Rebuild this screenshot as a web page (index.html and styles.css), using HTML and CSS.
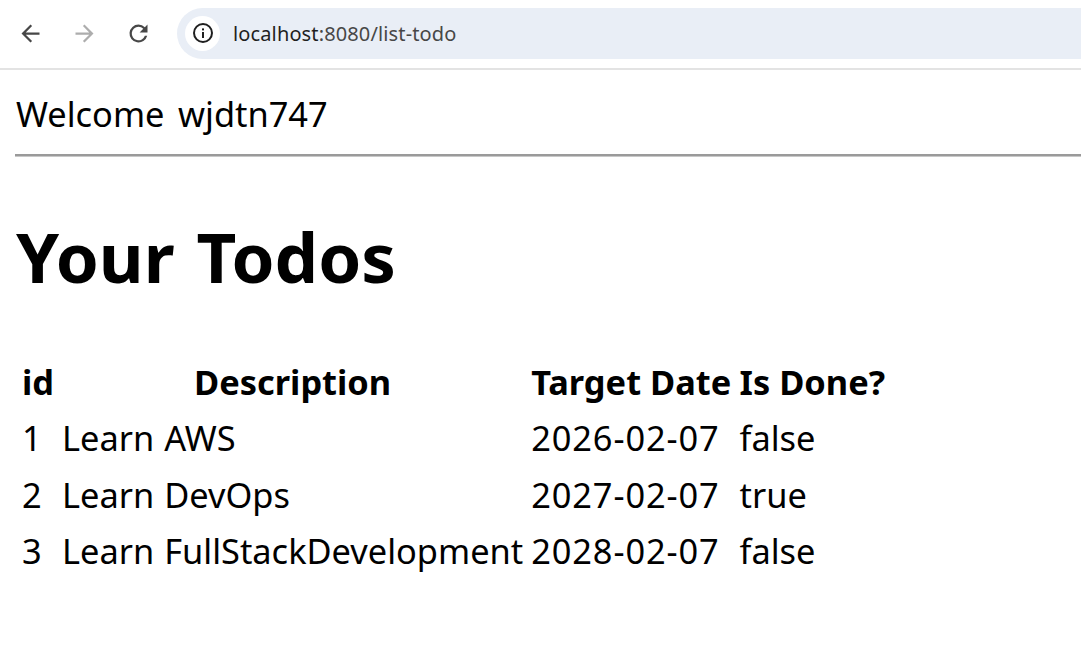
FILE: index.html
```html
<!DOCTYPE html>
<html lang="en">
<head>
<meta charset="utf-8">
<title>list-todo</title>
<link rel="stylesheet" href="styles.css">
</head>
<body>
<header class="toolbar">
  <button class="nav-btn" aria-label="Back">
    <svg viewBox="0 0 24 24" width="27" height="27"><path d="M20 11H7.8l5.6-5.6L12 4l-8 8 8 8 1.4-1.4L7.8 13H20z" fill="#474747"/></svg>
  </button>
  <button class="nav-btn" aria-label="Forward">
    <svg viewBox="0 0 24 24" width="27" height="27"><path d="M4 11h12.2l-5.6-5.6L12 4l8 8-8 8-1.4-1.4 5.6-5.6H4z" fill="#adadad"/></svg>
  </button>
  <button class="nav-btn" aria-label="Reload">
    <svg viewBox="0 0 24 24" width="27" height="27"><path d="M12 4a8 8 0 1 0 7.75 10h-2.08A6 6 0 1 1 12 6c1.66 0 3.14.69 4.22 1.78L13 11h7V4l-2.35 2.35A7.96 7.96 0 0 0 12 4z" fill="#474747"/></svg>
  </button>
  <div class="omnibox">
    <span class="site-info">
      <svg viewBox="0 0 24 24" width="24" height="24"><circle cx="12" cy="12" r="9" fill="none" stroke="#1f1f1f" stroke-width="2"/><rect x="11" y="11" width="2" height="6" fill="#1f1f1f"/><rect x="11" y="7.4" width="2" height="2" fill="#1f1f1f"/></svg>
    </span>
    <span class="url"><span class="host">localhost</span>:8080/list-todo</span>
  </div>
</header>
<main class="page">
  <div class="welcome">Welcome wjdtn747</div>
  <hr class="rule">
  <h1 class="title">Your Todos</h1>
  <table class="todos">
    <thead>
      <tr><th class="c-id">id</th><th class="c-desc">Description</th><th class="c-date">Target Date</th><th class="c-done">Is Done?</th></tr>
    </thead>
    <tbody>
      <tr><td>1</td><td>Learn AWS</td><td class="date">2026-02-07</td><td>false</td></tr>
      <tr><td>2</td><td>Learn DevOps</td><td class="date">2027-02-07</td><td>true</td></tr>
      <tr><td>3</td><td>Learn FullStackDevelopment</td><td class="date">2028-02-07</td><td>false</td></tr>
    </tbody>
  </table>
</main>
</body>
</html>
```
FILE: styles.css
```css
* { box-sizing: border-box; }
html, body { margin: 0; padding: 0; background: #fff; overflow: hidden; }
body { width: 1081px; height: 658px; font-family: "Noto Sans", "Noto Sans CJK KR", sans-serif; color: #000; }

.toolbar { height: 70px; display: flex; align-items: center; padding: 0 0 2px 3px; border-bottom: 2px solid #e3e3e3; background: #fff; }
.nav-btn { width: 54px; height: 40px; padding: 0; border: 0; background: none; display: flex; align-items: center; justify-content: center; }
.omnibox { flex: 1; height: 51px; margin-left: 12px; border-radius: 26px 0 0 26px; background: #e9eef6; display: flex; align-items: center; padding-left: 8px; }
.site-info { width: 35px; height: 35px; border-radius: 50%; background: #fff; display: flex; align-items: center; justify-content: center; }
.url { margin-left: 13px; font-size: 20px; letter-spacing: 0.13px; color: #474747; }
.host { color: #1f1f1f; }

.page { padding: 0 0 0 16px; }
.welcome { font-size: 34.4px; line-height: 44px; margin-top: 22px; word-spacing: 4.6px; }
.rule { margin: 18px 0 0 -1px; height: 3px; border: 0; border-top: 2px solid #9a9a9a; border-bottom: 1px solid #c8c8c8; }
.title { margin: 53px 0 0; font-size: 69px; line-height: 92px; font-weight: 700; word-spacing: 4px; }

.todos { margin-top: 51px; border-collapse: separate; border-spacing: 4px 0; font-size: 34.4px; word-spacing: 1px; table-layout: fixed; width: 890px; }
.todos th, .todos td { padding: 0 2px; height: 56.5px; white-space: nowrap; text-align: left; }
.todos th { font-weight: 700; word-spacing: 0; }
.todos .c-id { width: 36px; }
.todos .c-desc { width: 464px; text-align: center; }
.todos .c-date { width: 204px; }
.todos .c-done { width: 164px; }
.date { letter-spacing: 0.9px; }
```
